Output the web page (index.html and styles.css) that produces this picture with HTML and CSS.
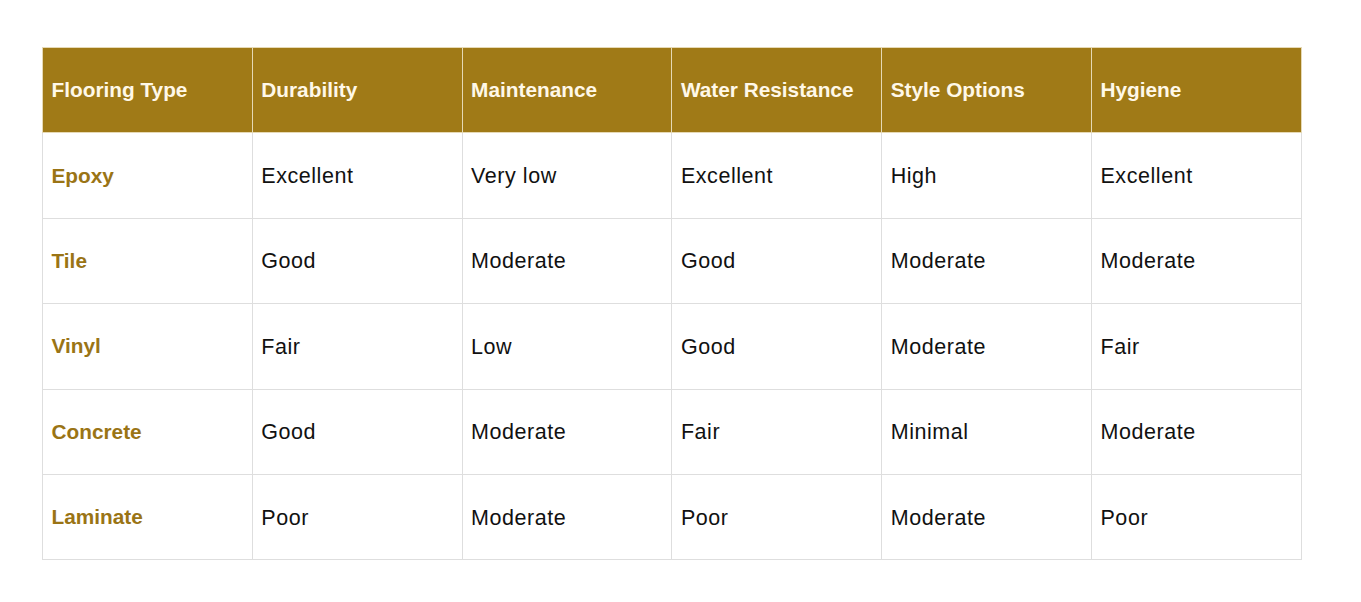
FILE: index.html
```html
<!DOCTYPE html>
<html>
<head>
<meta charset="utf-8">
<link rel="stylesheet" href="styles.css">
</head>
<body>
<div class="wrap">
<table class="cmp">
  <thead>
    <tr><th>Flooring Type</th><th>Durability</th><th>Maintenance</th><th>Water Resistance</th><th>Style Options</th><th>Hygiene</th></tr>
  </thead>
  <tbody>
    <tr><td class="type">Epoxy</td><td>Excellent</td><td>Very low</td><td>Excellent</td><td>High</td><td>Excellent</td></tr>
    <tr><td class="type">Tile</td><td>Good</td><td>Moderate</td><td>Good</td><td>Moderate</td><td>Moderate</td></tr>
    <tr><td class="type">Vinyl</td><td>Fair</td><td>Low</td><td>Good</td><td>Moderate</td><td>Fair</td></tr>
    <tr><td class="type">Concrete</td><td>Good</td><td>Moderate</td><td>Fair</td><td>Minimal</td><td>Moderate</td></tr>
    <tr><td class="type">Laminate</td><td>Poor</td><td>Moderate</td><td>Poor</td><td>Moderate</td><td>Poor</td></tr>
  </tbody>
</table>
</div>
</body>
</html>
```
FILE: styles.css
```css
html, body {
  margin: 0;
  padding: 0;
  background: #ffffff;
}
.wrap {
  padding: 47px 0 0 42px;
}
.cmp {
  border-collapse: collapse;
  table-layout: fixed;
  width: 1259px;
  font-family: "Liberation Sans", Arial, sans-serif;
}
.cmp th, .cmp td {
  width: 209.8px;
  height: 85.4px;
  box-sizing: border-box;
  padding: 0 8px 0 8.5px;
  text-align: left;
  vertical-align: middle;
  border: 1px solid #dedede;
}
.cmp th {
  background: #a07a17;
  color: #fff8e8;
  font-weight: bold;
  font-size: 20.8px;
  border-color: #e6d9b5;
}
.cmp td {
  color: #111111;
  font-size: 21.5px;
  letter-spacing: 0.55px;
  padding-top: 2px;
}
.cmp td.type {
  color: #9a7415;
  font-weight: bold;
  font-size: 20.8px;
  letter-spacing: 0;
  padding-top: 0;
}
```
